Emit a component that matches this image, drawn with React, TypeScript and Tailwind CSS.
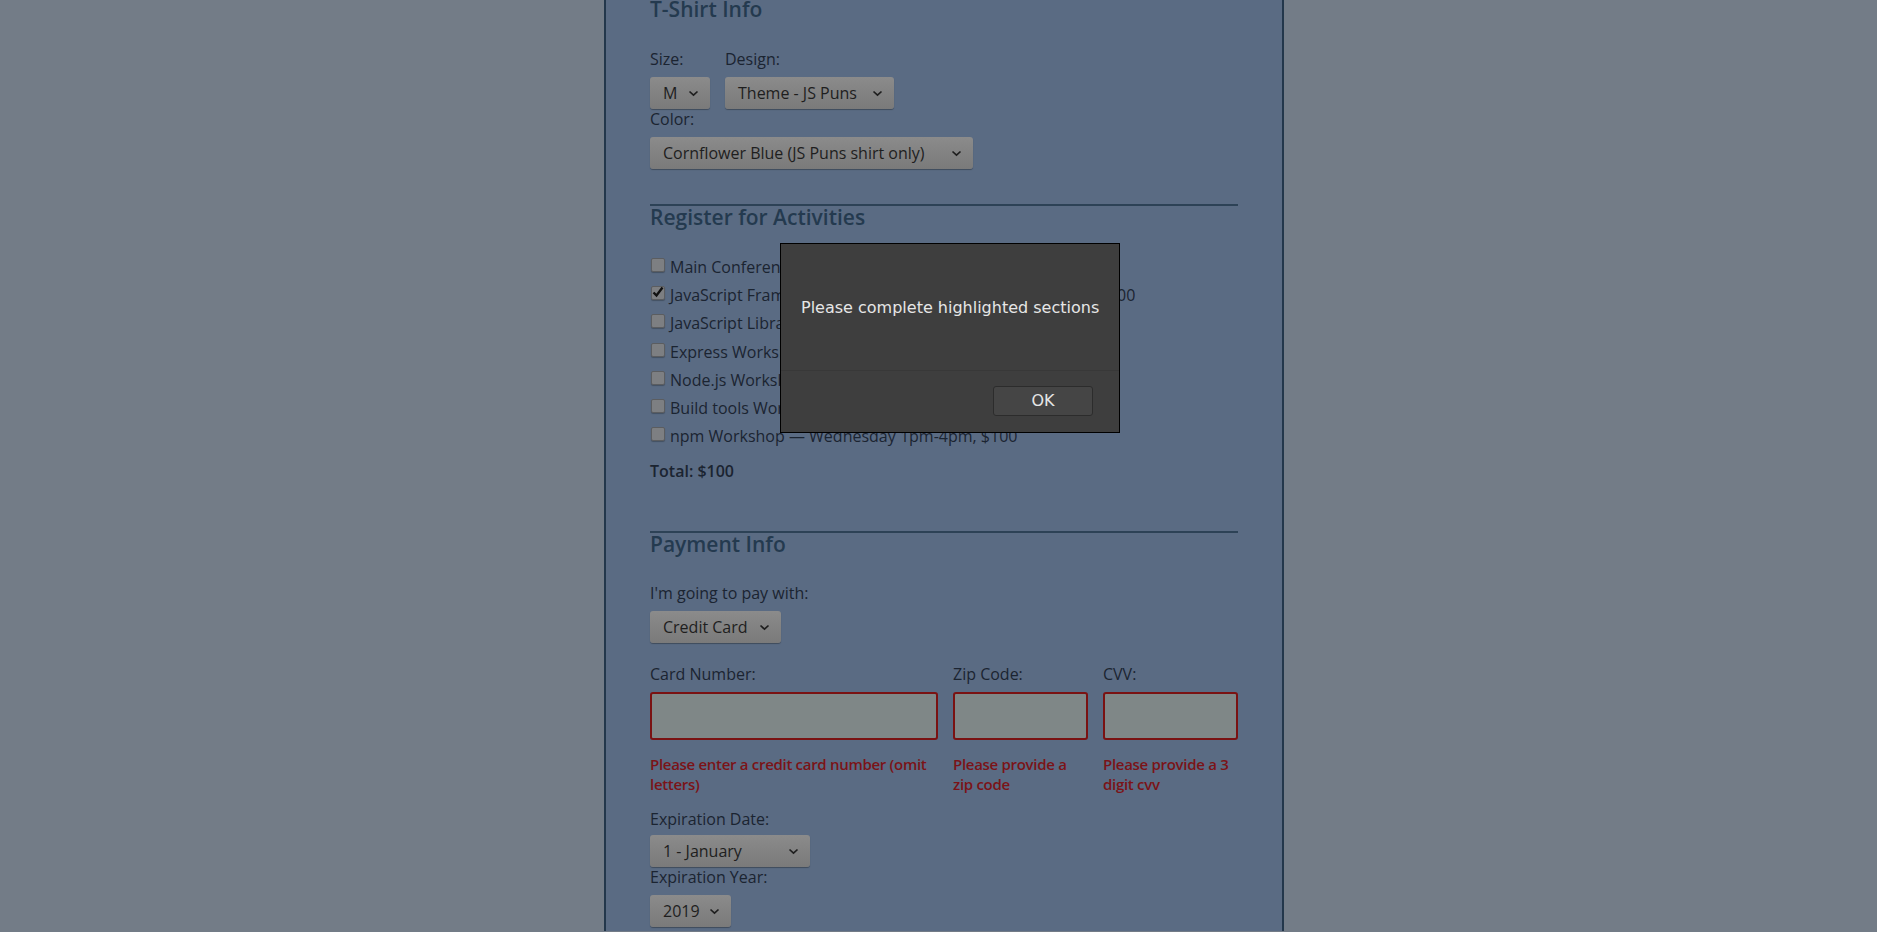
import React from 'react';

const ACTIVITIES = [
  { label: 'Main Conference — $200', checked: false },
  { label: 'JavaScript Frameworks Workshop — Tuesday 9am-12pm, $100', checked: true },
  { label: 'JavaScript Libraries Workshop — Tuesday 1pm-4pm, $100', checked: false },
  { label: 'Express Workshop — Tuesday 9am-12pm, $100', checked: false },
  { label: 'Node.js Workshop — Tuesday 1pm-4pm, $100', checked: false },
  { label: 'Build tools Workshop — Wednesday 9am-12pm, $100', checked: false },
  { label: 'npm Workshop — Wednesday 1pm-4pm, $100', checked: false },
];

function Chevron() {
  return (
    <svg width="11" height="7" viewBox="0 0 11 7" className="shrink-0">
      <polyline points="1.5,1.5 5.5,5.2 9.5,1.5" fill="none" stroke="#1e1e1e" strokeWidth="1.7" />
    </svg>
  );
}

function FakeSelect({ value, className }: { value: string; className: string }) {
  return (
    <div
      className={`${className} h-8 flex items-center justify-between pl-[13px] pr-[11px] rounded-[3px] bg-linear-to-b from-[#8b8b8b] to-[#7a7a7a] shadow-[0_1px_1px_rgba(0,0,0,0.3)] text-[#1e1e1e] text-[16px] leading-5`}
    >
      <span className="whitespace-nowrap">{value}</span>
      <Chevron />
    </div>
  );
}

function Label({ children, className = '' }: { children: React.ReactNode; className?: string }) {
  return <div className={`text-[16px] leading-5 text-[#1b2431] ${className}`}>{children}</div>;
}

function Checkbox({ checked }: { checked: boolean }) {
  return (
    <div className="relative w-[14px] h-[14px] mt-[5px] ml-[1px] shrink-0 rounded-[2px] border border-[#5b5d60] bg-[#7d7f82] shadow-[0_1px_1px_rgba(0,0,0,0.25)]">
      {checked && (
        <svg width="14" height="14" viewBox="0 0 14 14" className="absolute -left-px -top-[2px]">
          <path d="M2.5 7.5 L5.5 10.5 L11.5 2.5" fill="none" stroke="#111" strokeWidth="2.4" />
        </svg>
      )}
    </div>
  );
}

const ERROR = 'mt-[14px] text-[15px] leading-5 font-semibold tracking-[-0.3px] text-[#7b1317]';

export default function App() {
  return (
    <div className="relative h-[932px] overflow-hidden bg-[#737c87] font-['Open_Sans',sans-serif]">
      {/* form panel, scrolled past the top */}
      <div className="ml-[604px] w-[680px] h-full border-x-2 border-[#23374b] bg-[#5a6b83] px-[44px]">
        <div className="-mt-[1px] flex flex-col">
          <h2 className="text-[21px] leading-5 font-semibold text-[#243a4f]">T-Shirt Info</h2>

          <div className="mt-[30px] flex gap-[15px]">
            <div className="flex flex-col">
              <Label>Size:</Label>
              <FakeSelect value="M" className="mt-2 w-[60px]" />
            </div>
            <div className="flex flex-col">
              <Label>Design:</Label>
              <FakeSelect value="Theme - JS Puns" className="mt-2 w-[169px]" />
            </div>
          </div>
          <Label>Color:</Label>
          <FakeSelect value="Cornflower Blue (JS Puns shirt only)" className="mt-2 w-[323px]" />

          <div className="mt-[35px] h-[2px] bg-[#2d4256]" />
          <h2 className="mt-[1px] text-[21px] leading-5 font-semibold text-[#243a4f]">Register for Activities</h2>

          <div className="mt-[26px] flex flex-col">
            {ACTIVITIES.map(a => (
              <div key={a.label} className="h-[28.2px] flex items-start gap-[5px] text-[16px] leading-[28px] text-[#1b2431]">
                <Checkbox checked={a.checked} />
                <span className="whitespace-nowrap">{a.label}</span>
              </div>
            ))}
          </div>
          <div className="mt-[11px] text-[16px] leading-5 font-semibold text-[#1b2431]">Total: $100</div>

          <div className="mt-[50px] h-[2px] bg-[#2d4256]" />
          <h2 className="mt-[1px] text-[21px] leading-5 font-semibold text-[#243a4f]">Payment Info</h2>

          <Label className="mt-[29px]">I'm going to pay with:</Label>
          <FakeSelect value="Credit Card" className="mt-[8px] w-[131px]" />

          <div className="mt-[21px] grid grid-cols-[288px_135px_135px] gap-x-[15px]">
            <Label>Card Number:</Label>
            <Label>Zip Code:</Label>
            <Label>CVV:</Label>
            {['card', 'zip', 'cvv'].map(k => (
              <div key={k} className="mt-2 h-12 rounded-[3px] border-2 border-[#7a1212] bg-[#7f8787]" />
            ))}
            <div className={ERROR}>Please enter a credit card number (omit letters)</div>
            <div className={ERROR}>Please provide a zip code</div>
            <div className={ERROR}>Please provide a 3 digit cvv</div>
          </div>

          <Label className="mt-[15px]">Expiration Date:</Label>
          <FakeSelect value="1 - January" className="mt-[6px] w-[160px]" />
          <Label>Expiration Year:</Label>
          <FakeSelect value="2019" className="mt-[8px] w-[81px]" />
        </div>
      </div>

      {/* alert dialog */}
      <div className="absolute left-[780px] top-[243px] w-[340px] h-[190px] flex flex-col border border-black bg-[#3e3e3e] font-['DejaVu_Sans',sans-serif] text-[#e6e6e6]">
        <div className="h-[127px] border-b border-[#383838] pl-[20px] pt-[54px] text-[16px] leading-[19px]">
          Please complete highlighted sections
        </div>
        <div className="flex justify-end pt-[15px] pr-[26px]">
          <div className="w-[100px] h-[30px] flex items-center justify-center rounded-[3px] border border-[#2c2c2c] bg-[#454545] text-[16px]">
            OK
          </div>
        </div>
      </div>
    </div>
  );
}
